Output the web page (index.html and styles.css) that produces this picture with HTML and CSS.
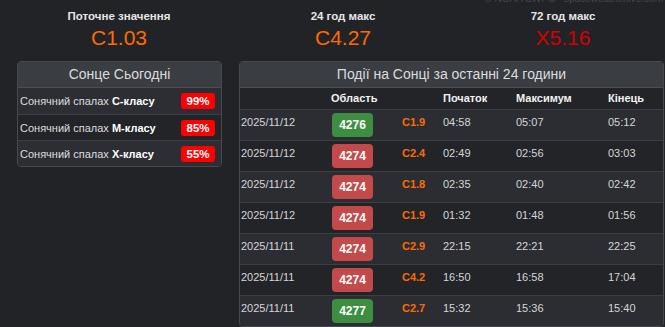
FILE: index.html
```html
<!DOCTYPE html>
<html lang="uk">
<head>
<meta charset="utf-8">
<link rel="stylesheet" href="styles.css">
</head>
<body>
<div class="credit">© NOAA SWPC - spaceweatherlive.com</div>
<div class="top">
  <div class="stat">
    <div class="stat-label">Поточне значення</div>
    <div class="stat-value orange">C1.03</div>
  </div>
  <div class="stat">
    <div class="stat-label">24 год макс</div>
    <div class="stat-value orange">C4.27</div>
  </div>
  <div class="stat">
    <div class="stat-label">72 год макс</div>
    <div class="stat-value red">X5.16</div>
  </div>
</div>
<div class="main">
  <div class="panel panel-left">
    <div class="panel-head">Сонце Сьогодні</div>
    <div class="prob-row light">
      <span>Сонячний спалах <b>C-класу</b></span><span class="pct">99%</span>
    </div>
    <div class="prob-row">
      <span>Сонячний спалах <b>M-класу</b></span><span class="pct">85%</span>
    </div>
    <div class="prob-row light">
      <span>Сонячний спалах <b>X-класу</b></span><span class="pct">55%</span>
    </div>
  </div>
  <div class="panel panel-right">
    <div class="panel-head">Події на Сонці за останні 24 години</div>
    <table class="events">
      <colgroup>
        <col class="c-date"><col class="c-reg"><col class="c-cls"><col class="c-start"><col class="c-max"><col class="c-end">
      </colgroup>
      <thead>
        <tr><th></th><th>Область</th><th></th><th>Початок</th><th>Максимум</th><th>Кінець</th></tr>
      </thead>
      <tbody>
        <tr><td>2025/11/12</td><td><span class="region green">4276</span></td><td class="cls">C1.9</td><td>04:58</td><td>05:07</td><td>05:12</td></tr>
        <tr><td>2025/11/12</td><td><span class="region redb">4274</span></td><td class="cls">C2.4</td><td>02:49</td><td>02:56</td><td>03:03</td></tr>
        <tr><td>2025/11/12</td><td><span class="region redb">4274</span></td><td class="cls">C1.8</td><td>02:35</td><td>02:40</td><td>02:42</td></tr>
        <tr><td>2025/11/12</td><td><span class="region redb">4274</span></td><td class="cls">C1.9</td><td>01:32</td><td>01:48</td><td>01:56</td></tr>
        <tr><td>2025/11/11</td><td><span class="region redb">4274</span></td><td class="cls">C2.9</td><td>22:15</td><td>22:21</td><td>22:25</td></tr>
        <tr><td>2025/11/11</td><td><span class="region redb">4274</span></td><td class="cls">C4.2</td><td>16:50</td><td>16:58</td><td>17:04</td></tr>
        <tr><td>2025/11/11</td><td><span class="region green">4277</span></td><td class="cls">C2.7</td><td>15:32</td><td>15:36</td><td>15:40</td></tr>
      </tbody>
    </table>
  </div>
</div>
</body>
</html>
```
FILE: styles.css
```css
html, body {
  margin: 0;
  padding: 0;
  background: #222327;
  color: #d6d6d6;
  font-family: "Liberation Sans", Arial, sans-serif;
  overflow: hidden;
}
.credit {
  text-align: right;
  font-size: 10px;
  line-height: 10px;
  color: #45474b;
  margin-top: -6px;
  padding-right: 2px;
  height: 4px;
  overflow: visible;
}
.top {
  display: grid;
  grid-template-columns: 224px 224px 216px;
  padding-left: 7px;
  padding-top: 11px;
  height: 52px;
}
.stat {
  text-align: center;
}
.stat-label {
  font-weight: bold;
  font-size: 11.5px;
  line-height: 14px;
  color: #e6e6e6;
}
.stat-value {
  font-size: 21px;
  line-height: 26px;
  margin-top: 2px;
}
.orange { color: #ff6a00; }
.red { color: #d40000; }

.main {
  display: flex;
  align-items: flex-start;
  gap: 17px;
  padding-left: 17px;
}
.panel {
  border: 1px solid #46494e;
  border-radius: 4px;
  overflow: hidden;
  background: #222428;
}
.panel-left { width: 203px; }
.panel-right { width: 423px; }
.panel-head {
  background: #3a3d42;
  color: #dcdcdc;
  text-align: center;
  font-size: 14px;
  height: 25px;
  line-height: 25px;
  border-bottom: 1px solid #4a4d52;
}
.prob-row {
  display: flex;
  justify-content: space-between;
  align-items: center;
  height: 25px;
  padding: 0 6px 0 2px;
  font-size: 11px;
  color: #dedede;
  border-top: 1px solid #3b3e43;
}
.panel-head + .prob-row { border-top: none; height: 26px; }
.prob-row b { color: #fff; }
.light { background: #2c2e33; }
.pct {
  background: #ff0000;
  color: #fff;
  font-weight: bold;
  font-size: 11.5px;
  width: 34px;
  height: 16px;
  line-height: 16px;
  text-align: center;
  border-radius: 3px;
}
.events {
  width: 423px;
  table-layout: fixed;
  border-collapse: collapse;
  font-size: 11px;
}
.c-date { width: 90px; }
.c-reg { width: 71px; }
.c-cls { width: 41px; }
.c-start { width: 73px; }
.c-max { width: 92px; }
.c-end { width: 56px; }
.events th {
  text-align: left;
  font-weight: bold;
  color: #f2f2f2;
  height: 21px;
  padding: 0 0 0 1px;
  line-height: 21px;
  font-size: 11px;
}
.events td {
  vertical-align: top;
  padding: 5px 0 0 1px;
  line-height: 14px;
  height: 25px;
  border-top: 1px solid #3b3e43;
  color: #d6d6d6;
}
.events tbody tr:nth-child(odd) { background: #2b2d32; }
.events td.cls {
  color: #ff6a00;
  font-weight: bold;
}
.events td:nth-child(2) { padding-top: 3px; }
.region {
  display: block;
  width: 41px;
  height: 24px;
  line-height: 24px;
  text-align: center;
  color: #fff;
  font-weight: bold;
  font-size: 12px;
  border-radius: 4px;
  margin-left: 1px;
}
.green { background: #3e8e41; }
.redb { background: #c24a4b; }
```
